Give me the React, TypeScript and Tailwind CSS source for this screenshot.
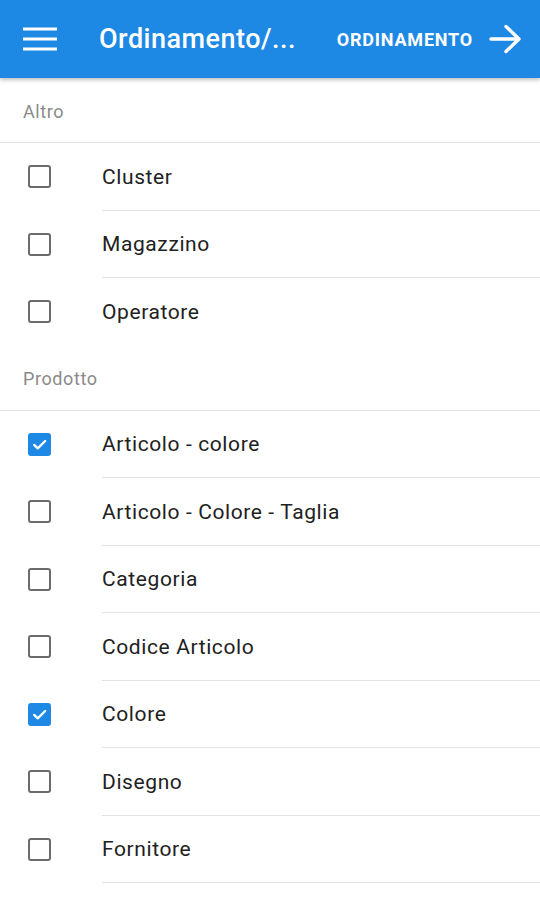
import React from "react";

const sections: { title: string; items: { label: string; checked: boolean }[] }[] = [
  {
    title: "Altro",
    items: [
      { label: "Cluster", checked: false },
      { label: "Magazzino", checked: false },
      { label: "Operatore", checked: false },
    ],
  },
  {
    title: "Prodotto",
    items: [
      { label: "Articolo - colore", checked: true },
      { label: "Articolo - Colore - Taglia", checked: false },
      { label: "Categoria", checked: false },
      { label: "Codice Articolo", checked: false },
      { label: "Colore", checked: true },
      { label: "Disegno", checked: false },
      { label: "Fornitore", checked: false },
    ],
  },
];

function Check({ checked }: { checked: boolean }) {
  if (checked) {
    return (
      <div className="w-[23px] h-[23px] rounded-[3px] bg-[#1e88e5] flex items-center justify-center">
        <svg width="17" height="17" viewBox="0 0 24 24">
          <path d="M4.5 12.5l5 5L20 7" fill="none" stroke="white" strokeWidth="3.2" strokeLinecap="round" strokeLinejoin="round" />
        </svg>
      </div>
    );
  }
  return <div className="w-[23px] h-[23px] rounded-[3px] border-[2.5px] border-[#6b6b6b]" />;
}

export default function App() {
  return (
    <div className="w-[540px] h-[900px] bg-white overflow-hidden" style={{ fontFamily: "Roboto, 'Noto Sans', sans-serif" }}>
      <div className="h-[78px] bg-[#1e88e5] flex items-center shadow-[0_2px_4px_rgba(0,0,0,0.25)] relative z-10">
        <div className="w-[99px] pl-[23px] flex items-center">
          <svg width="34" height="26" viewBox="0 0 34 26">
            <rect x="0" y="1.5" width="34" height="3" fill="white" />
            <rect x="0" y="11.5" width="34" height="3" fill="white" />
            <rect x="0" y="21.5" width="34" height="3" fill="white" />
          </svg>
        </div>
        <div className="text-white text-[27px] tracking-[0.5px] font-medium flex-1 whitespace-nowrap">Ordinamento/...</div>
        <div className="text-white text-[18px] font-bold tracking-[0.8px] mr-[16px]">ORDINAMENTO</div>
        <svg width="34" height="30" viewBox="0 0 34 30" className="mr-[17px]">
          <path d="M2 15h28M17 2.5l13 12.5-13 12.5" fill="none" stroke="white" strokeWidth="3.4" strokeLinecap="round" strokeLinejoin="round" />
        </svg>
      </div>
      {sections.map((s) => (
        <div key={s.title}>
          <div className="h-[65px] flex items-center pt-[2px] pl-[23px] text-[18px] tracking-[0.6px] text-[#8a8a8a] border-b border-[#e2e2e2]">
            {s.title}
          </div>
          {s.items.map((it, i) => (
            <div key={it.label} className="h-[67.5px] flex items-center">
              <div className="w-[102px] pl-[28px] flex items-center">
                <Check checked={it.checked} />
              </div>
              <div
                className={`flex-1 h-full flex items-center pt-[2px] text-[21px] tracking-[0.6px] text-[#212121] ${
                  i < s.items.length - 1 || s.title === "Prodotto" ? "border-b border-[#e2e2e2]" : ""
                }`}
              >
                {it.label}
              </div>
            </div>
          ))}
        </div>
      ))}
    </div>
  );
}
